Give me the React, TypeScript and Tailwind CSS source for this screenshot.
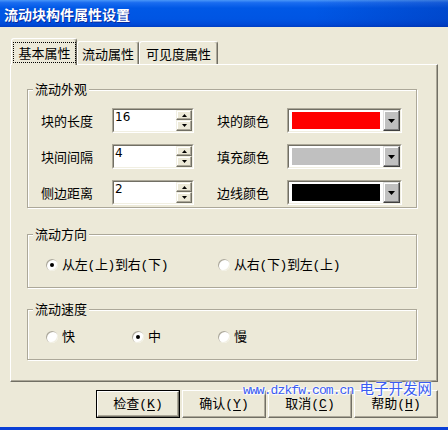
import React from "react";

function Tab({ selected, w, children }: { selected?: boolean; w: string; children: React.ReactNode }) {
  if (selected) {
    return (
      <div className={`${w} relative z-10 -mb-[1px] h-[27px] rounded-t-[3px] border-l border-r border-t border-l-white border-r-[#716f64] border-t-white bg-[#ECE9D8] pl-[1px] pt-[3px] shadow-[inset_-1px_0_0_#aca899]`}>
        <div className="flex h-[21px] w-full items-center justify-center border border-dotted border-black">{children}</div>
      </div>
    );
  }
  return (
    <div className={`${w} flex h-[23px] items-center justify-center rounded-t-[3px] border-l border-r border-t border-l-white border-r-[#716f64] border-t-white bg-[#ECE9D8] pt-[1px] shadow-[inset_-1px_0_0_#aca899]`}>
      {children}
    </div>
  );
}

function Group({ label, className, children }: { label: string; className: string; children: React.ReactNode }) {
  return (
    <div className={`relative w-[390px] border border-[#aca899] shadow-[inset_1px_1px_0_#fff,1px_1px_0_#fff] ${className}`}>
      <span className="absolute left-[5px] top-[-8px] bg-[#ECE9D8] px-[2px] leading-[13px]">{label}</span>
      {children}
    </div>
  );
}

function Arrow({ up, size }: { up?: boolean; size: "s" | "l" }) {
  if (size === "s") {
    return (
      <svg width="5" height="3" viewBox="0 0 5 3" className="block">
        {up ? <polygon points="2.5,0 5,3 0,3" fill="#000" /> : <polygon points="0,0 5,0 2.5,3" fill="#000" />}
      </svg>
    );
  }
  return (
    <svg width="7" height="4" viewBox="0 0 7 4" className="block">
      <polygon points="0,0 7,0 3.5,4" fill="#000" />
    </svg>
  );
}

function SpinBtn({ up, h }: { up?: boolean; h: string }) {
  return (
    <div className={`${h} flex w-[16px] items-center justify-center border border-b-[#716f64] border-l-[#f1efe2] border-r-[#716f64] border-t-[#f1efe2] bg-[#ECE9D8] shadow-[inset_-1px_-1px_0_#aca899,inset_1px_1px_0_#fff]`}>
      <Arrow up={up} size="s" />
    </div>
  );
}

function Spin({ value }: { value: string }) {
  return (
    <div className="flex h-[25px] w-[82px] border border-b-white border-l-[#aca899] border-r-white border-t-[#aca899]">
      <div className="flex flex-1 border border-b-[#f1efe2] border-l-[#716f64] border-r-[#f1efe2] border-t-[#716f64] bg-white">
        <div className="flex-1 pl-[1px] pt-[1px] font-['DejaVu_Sans',sans-serif] text-[12px] leading-[13px]">{value}</div>
        <div className="flex flex-col">
          <SpinBtn up h="h-[10px]" />
          <SpinBtn h="h-[11px]" />
        </div>
      </div>
    </div>
  );
}

function ColorCombo({ color }: { color: string }) {
  return (
    <div className="flex h-[25px] w-[115px] border border-b-white border-l-[#aca899] border-r-white border-t-[#aca899]">
      <div className="flex flex-1 items-center border border-b-[#f1efe2] border-l-[#716f64] border-r-[#f1efe2] border-t-[#716f64] bg-white">
        <div className={`ml-[3px] h-[17px] w-[88px] ${color}`} />
        <div className="ml-[3px] flex h-[21px] w-[17px] items-center justify-center border border-b-[#404040] border-l-[#e0e0e0] border-r-[#404040] border-t-[#e0e0e0] bg-[#c0c0c0] shadow-[inset_-1px_-1px_0_#808080,inset_1px_1px_0_#fff]">
          <Arrow size="l" />
        </div>
      </div>
    </div>
  );
}

function Row({ l1, v, l2, color }: { l1: string; v: string; l2: string; color: string }) {
  return (
    <div className="flex h-[25px] items-center">
      <div className="w-[71px]">{l1}</div>
      <Spin value={v} />
      <div className="ml-[23px] w-[70px]">{l2}</div>
      <ColorCombo color={color} />
    </div>
  );
}

function Radio({ checked, label, w }: { checked?: boolean; label: string; w: string }) {
  return (
    <div className={`${w} flex h-[14px] items-center`}>
      <div className="flex h-[12px] w-[12px] items-center justify-center rounded-full bg-white shadow-[inset_1px_1px_0_#aca899,inset_-1px_-1px_0_#f1efe2]">
        {checked && <div className="h-[4px] w-[4px] rounded-full bg-black" />}
      </div>
      <span className="ml-[4px] font-['Liberation_Mono','Noto_Sans_CJK_SC',monospace] tracking-[-0.3px]">{label}</span>
    </div>
  );
}

function Btn({ def, children }: { def?: boolean; children: React.ReactNode }) {
  const inner = (
    <div className="flex h-full w-full items-center justify-center border border-b-[#716f64] border-l-white border-r-[#716f64] border-t-white bg-[#ECE9D8] font-['Liberation_Mono','Noto_Sans_CJK_SC',monospace] shadow-[inset_-1px_-1px_0_#aca899]">
      {children}
    </div>
  );
  if (def) {
    return <div className="h-[28px] w-[84px] border border-black">{inner}</div>;
  }
  return <div className="h-[28px] w-[84px]">{inner}</div>;
}

export default function App() {
  return (
    <div className="relative flex h-[430px] w-[448px] flex-col overflow-hidden bg-[#ECE9D8] font-['Noto_Sans_CJK_SC',sans-serif] text-[13px] leading-none text-black">
      <div className="flex h-[27px] shrink-0 items-center bg-[linear-gradient(90deg,rgba(0,0,0,0)_70%,rgba(0,20,120,0.22)_100%),linear-gradient(180deg,#4a97f8_0%,#1a6cf0_10%,#0058e6_30%,#0055e3_70%,#004ad8_90%,#003ec4_100%)] pl-[4px] text-[14px] font-bold text-white [text-shadow:1px_1px_0_#0a2a9c]">
        流动块构件属性设置
      </div>

      <div className="mt-[11px] flex flex-col pl-[10px]">
        <div className="flex items-end pl-[1px]">
          <Tab selected w="w-[66px]">基本属性</Tab>
          <Tab w="w-[62px]">流动属性</Tab>
          <Tab w="w-[79px]">可见度属性</Tab>
        </div>

        <div className="flex h-[318px] w-[428px] flex-col border border-b-[#716f64] border-l-white border-r-[#716f64] border-t-white pl-[16px] pt-[24px] shadow-[inset_-1px_-1px_0_#aca899]">
          <Group label="流动外观" className="h-[119px]">
            <div className="flex flex-col gap-[11px] pl-[13px] pt-[18px]">
              <Row l1="块的长度" v="16" l2="块的颜色" color="bg-[#ff0000]" />
              <Row l1="块间间隔" v="4" l2="填充颜色" color="bg-[#c0c0c0]" />
              <Row l1="侧边距离" v="2" l2="边线颜色" color="bg-black" />
            </div>
          </Group>

          <Group label="流动方向" className="mt-[26px] h-[54px]">
            <div className="flex pl-[18px] pt-[23px]">
              <Radio checked w="w-[172px]" label="从左(上)到右(下)" />
              <Radio w="w-[172px]" label="从右(下)到左(上)" />
            </div>
          </Group>

          <Group label="流动速度" className="mt-[21px] h-[51px]">
            <div className="flex pl-[18px] pt-[20px]">
              <Radio w="w-[86px]" label="快" />
              <Radio checked w="w-[86px]" label="中" />
              <Radio w="w-[86px]" label="慢" />
            </div>
          </Group>
        </div>

        <div className="mt-[8px] flex w-[428px] justify-end gap-[2px]">
          <Btn def>
            检查(<span className="underline underline-offset-[2px]">K</span>)
          </Btn>
          <Btn>
            确认(<span className="underline underline-offset-[2px]">Y</span>)
          </Btn>
          <Btn>
            取消(<span className="underline underline-offset-[2px]">C</span>)
          </Btn>
          <Btn>
            帮助(<span className="underline underline-offset-[2px]">H</span>)
          </Btn>
        </div>
      </div>

      <div className="absolute left-[243px] top-[381px] flex items-baseline text-[#3a5cf2] [text-shadow:0_0_2px_#fff,0_0_2px_#fff,0_0_3px_#fff,1px_1px_1px_#fff]">
        <span className="font-['Liberation_Mono',monospace] text-[13px] tracking-[-0.9px]">www.dzkfw.com.cn</span>
        <span className="ml-[6px] text-[14.5px]">电子开发网</span>
      </div>

      <div className="mt-auto h-[3px] w-full bg-[#0a3fd6]" />
    </div>
  );
}
